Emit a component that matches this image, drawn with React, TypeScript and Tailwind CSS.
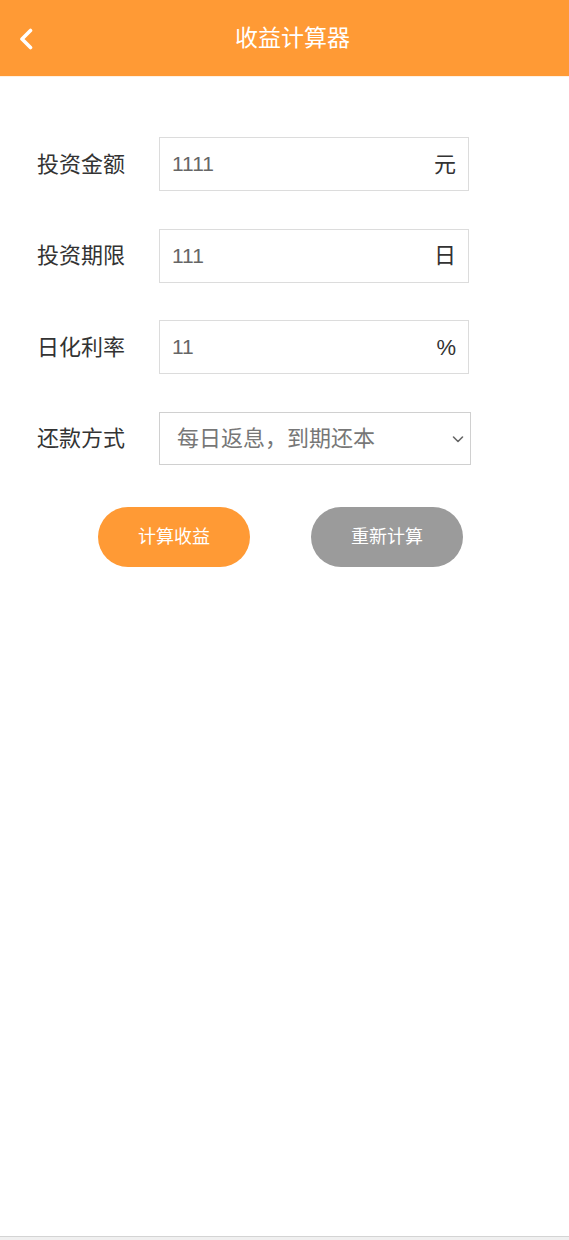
import React, { useState } from 'react';

const font = { fontFamily: '"Liberation Sans", "Noto Sans CJK SC", sans-serif' };

const Field: React.FC<{ label: string; value: string; unit: string; onChange: (v: string) => void }> = ({ label, value, unit, onChange }) => (
  <div className="flex items-center">
    <label className="w-[122px] text-[22px] text-[#333]">{label}</label>
    <div className="flex items-center w-[310px] h-[54px] border border-[#dcdcdc] bg-white pl-[12px] pr-[12px]">
      <input value={value} onChange={e => onChange(e.target.value)}
        className="flex-1 min-w-0 text-[21px] text-[#666] outline-none bg-transparent" style={font} />
      <span className="text-[22px] text-[#333]">{unit}</span>
    </div>
  </div>
);

export default function App() {
  const [form, setForm] = useState({ amount: '1111', days: '111', rate: '11' });

  return (
    <div className="w-[569px] h-[1240px] flex flex-col bg-white" style={font}>
      {/* Header */}
      <div className="relative h-[76px] bg-[#ff9a35] flex items-center justify-center shrink-0">
        <button className="absolute left-[16px] top-[27px] w-[20px] h-[24px] flex items-center justify-center">
          <svg width="16" height="22" viewBox="0 0 16 22" fill="none">
            <path d="M12.5 2.5 L4 11 L12.5 19.5" stroke="white" strokeWidth="3.6" strokeLinecap="round" strokeLinejoin="round" />
          </svg>
        </button>
        <h1 className="ml-[16px] text-[23px] text-white">收益计算器</h1>
      </div>
      <div className="h-px bg-[#fff1e2] shrink-0" />

      {/* Form */}
      <div className="flex-1 pt-[60px] pl-[37px] flex flex-col gap-[37.5px]">
        <Field label="投资金额" value={form.amount} unit="元" onChange={v => setForm(p => ({ ...p, amount: v }))} />
        <Field label="投资期限" value={form.days} unit="日" onChange={v => setForm(p => ({ ...p, days: v }))} />
        <Field label="日化利率" value={form.rate} unit="%" onChange={v => setForm(p => ({ ...p, rate: v }))} />
        <div className="flex items-center">
          <label className="w-[122px] text-[22px] text-[#333]">还款方式</label>
          <div className="relative w-[312px] h-[53px] border border-[#d0d0d0] bg-white flex items-center pl-[17px]">
            <span className="text-[22px] text-[#777]">每日返息，到期还本</span>
            <svg className="absolute right-[6px] top-[21px]" width="12" height="10" viewBox="0 0 12 10" fill="none">
              <path d="M1.5 3 L6 7.5 L10.5 3" stroke="#666" strokeWidth="1.6" strokeLinecap="round" strokeLinejoin="round" />
            </svg>
          </div>
        </div>

        <div className="flex gap-[61px] ml-[61px] mt-[5px]">
          <button className="w-[152px] h-[60px] rounded-full bg-[#ff9a35] text-white text-[18px]">计算收益</button>
          <button className="w-[152px] h-[60px] rounded-full bg-[#9b9b9b] text-white text-[18px]">重新计算</button>
        </div>
      </div>

      <div className="h-[4px] bg-[#f0f0f0] border-t border-[#d4d4d4] shrink-0" />
    </div>
  );
}
